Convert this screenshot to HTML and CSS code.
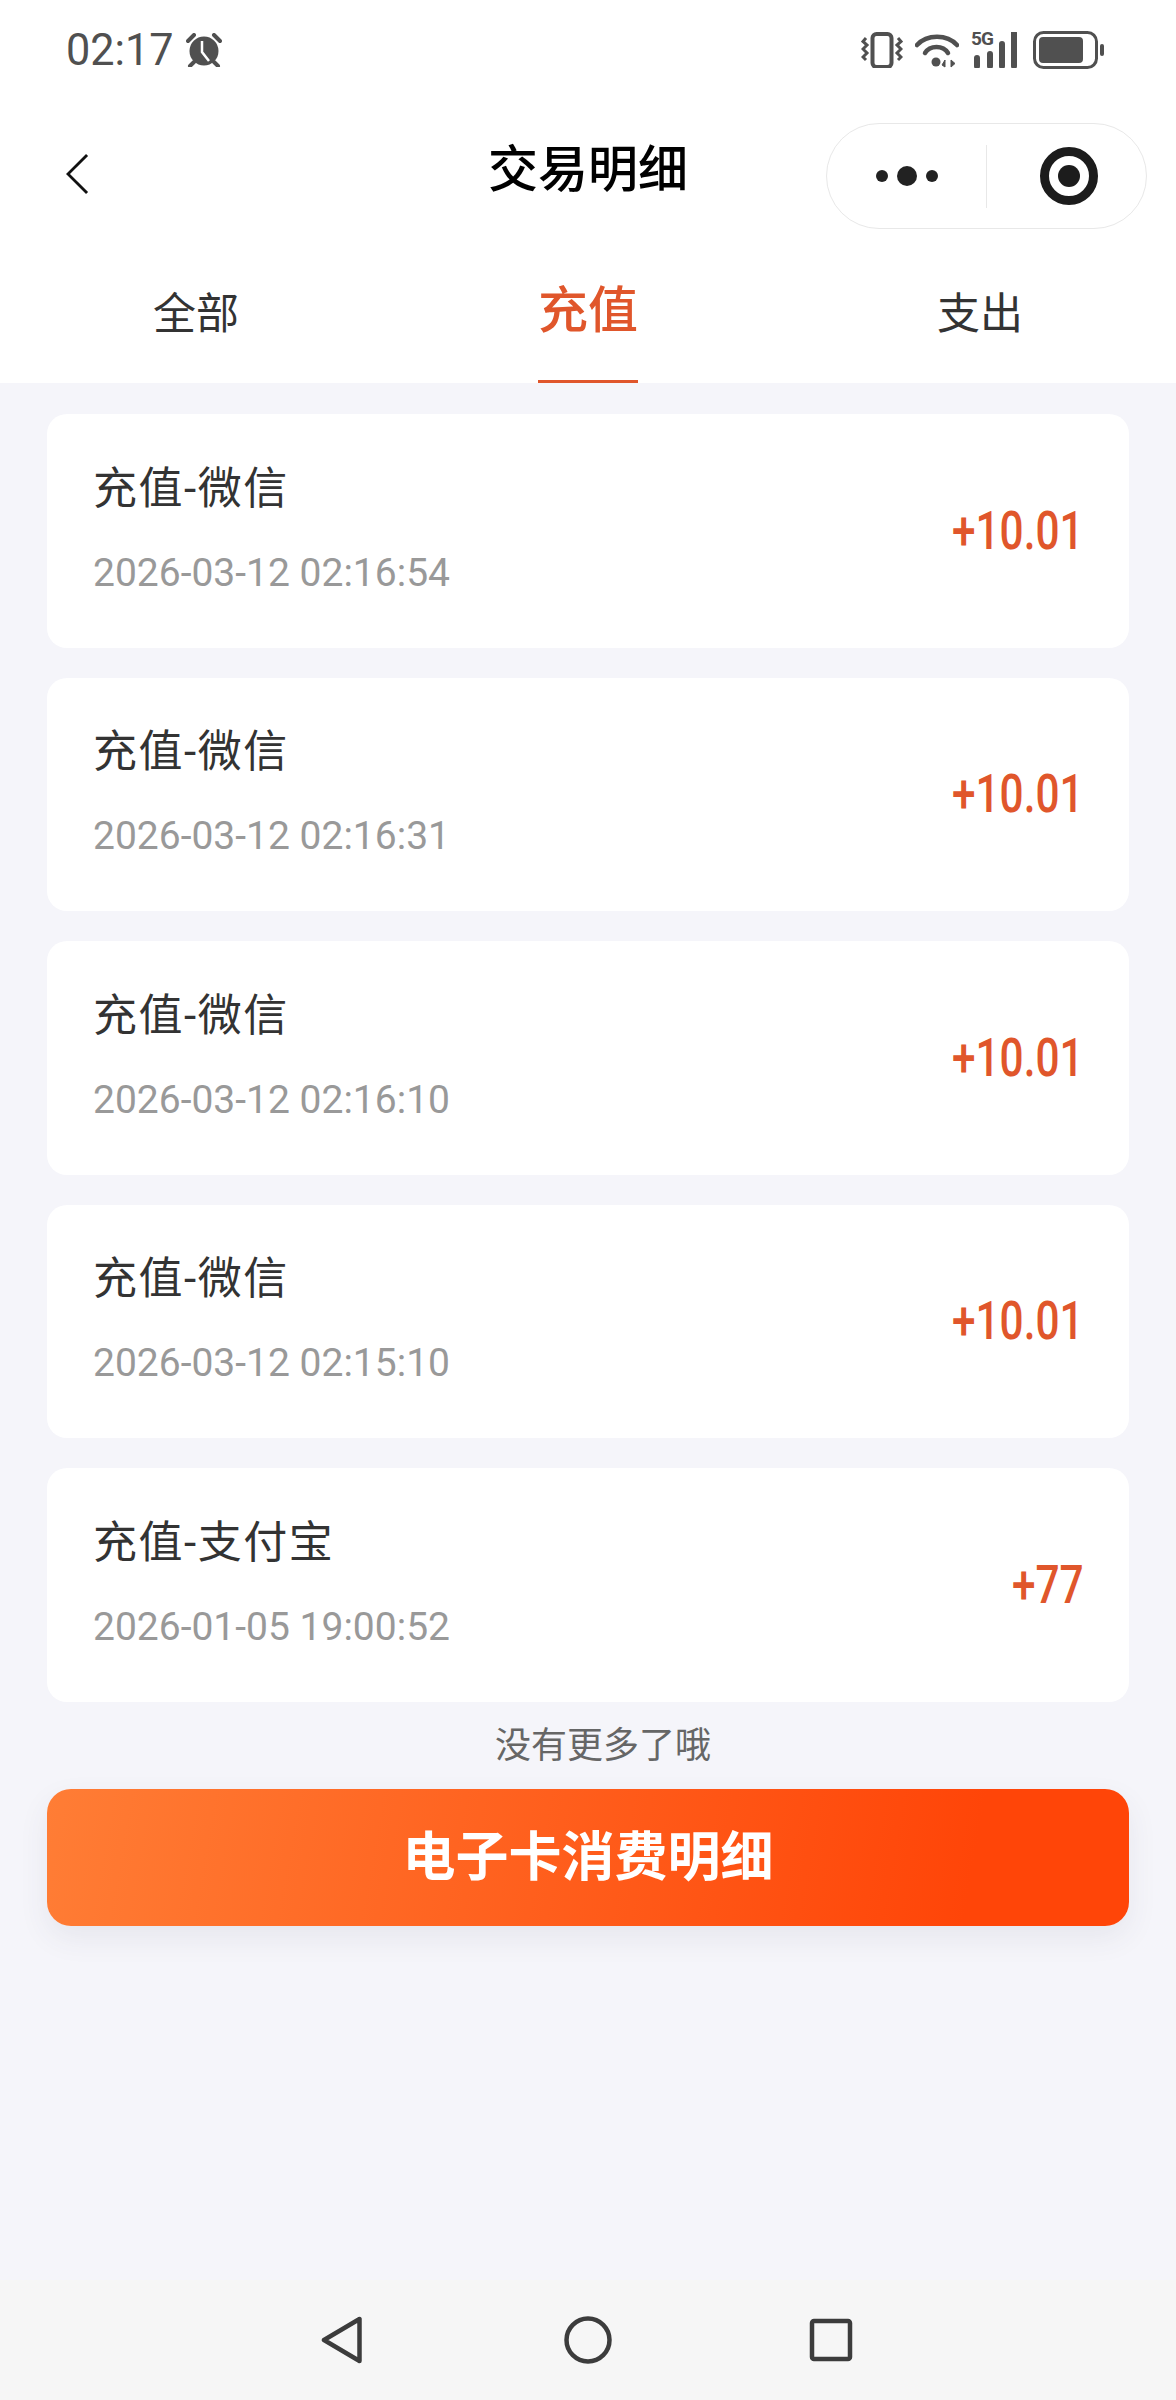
FILE: index.html
```html
<!DOCTYPE html>
<html lang="zh-CN">
<head>
    <meta charset="UTF-8">
    <meta name="viewport" content="width=device-width, initial-scale=1.0">
    <title>交易明细</title>
    <link rel="stylesheet" href="styles.css">
</head>
<body>

<div class="page">
    <header class="top">
        <div class="status-bar">
            <div class="status-left">
                <span class="clock">02:17</span>
                <svg class="alarm" width="36" height="34" viewBox="0 0 36 34">
                    <circle cx="18" cy="18" r="14.500" fill="#505050"/>
                    <path d="M2 8 L8 2 M34 8 L28 2 M8 29 L4 33 M28 29 L32 33" stroke="#505050" stroke-width="4" stroke-linecap="round"/>
                    <path d="M16 8 V19 L23 28" stroke="#fff" stroke-width="2.500" fill="none"/>
                </svg>
            </div>
            <div class="status-right">
                <svg width="42" height="36" viewBox="0 0 42 36">
                    <rect x="11.500" y="2" width="19" height="33" rx="4" fill="none" stroke="#505050" stroke-width="4"/>
                    <path d="M5 6 L2 9.500 L6 13 L2 17 L6 21 L2 25 L5 28 M37 6 L40 9.500 L36 13 L40 17 L36 21 L40 25 L37 28" fill="none" stroke="#505050" stroke-width="3"/>
                </svg>
                <svg width="44" height="36" viewBox="0 0 44 36">
                    <path d="M2 13 C12 2 32 2 42 13" fill="none" stroke="#505050" stroke-width="4.500" stroke-linecap="round"/>
                    <path d="M10 21 C15 13 28 13 33 21" fill="none" stroke="#505050" stroke-width="4.500" stroke-linecap="round"/>
                    <circle cx="21" cy="30" r="4.500" fill="#505050"/>
                    <path d="M30 35 V28 L27 33 Z M36 28 V35 L40 31.500 Z" fill="#505050" stroke="#505050"/>
                </svg>
                <div class="signal">
                    <span class="signal-5g">5G</span>
                    <svg width="50" height="36" viewBox="0 0 50 36">
                        <path d="M8 35 V27 M21 35 V23 M33 35 V13 M45 35 V2" stroke="#505050" stroke-width="6" stroke-linecap="round" fill="none" transform="translate(-2 -1)"/>
                    </svg>
                </div>
                <svg width="72" height="38" viewBox="0 0 72 38">
                    <rect x="1.500" y="1.500" width="62" height="35" rx="9" fill="none" stroke="#505050" stroke-width="3"/>
                    <rect x="6" y="6" width="44" height="26" rx="4" fill="#505050"/>
                    <rect x="67" y="13" width="4" height="12" rx="2" fill="#505050"/>
                </svg>
            </div>
        </div>

        <div class="title-bar">
            <svg class="back" width="23" height="42" viewBox="0 0 24 44">
                <path d="M22 2 L2 22 L22 42" fill="none" stroke="#111" stroke-width="3"/>
            </svg>
            <h1>交易明细</h1>
            <div class="capsule">
                <div class="capsule-side">
                    <i class="dot"></i><i class="dot dot-big"></i><i class="dot"></i>
                </div>
                <div class="capsule-side">
                    <i class="target"></i>
                </div>
            </div>
        </div>

        <nav class="tabs">
            <div class="tab"><span>全部</span></div>
            <div class="tab active"><span>充值</span></div>
            <div class="tab"><span>支出</span></div>
        </nav>
    </header>

    <main>
        <div class="list">
            <div class="card">
                <div class="card-info">
                    <div class="card-title">充值-微信</div>
                    <div class="card-date">2026-03-12 02:16:54</div>
                </div>
                <div class="amount">+10.01</div>
            </div>
            <div class="card">
                <div class="card-info">
                    <div class="card-title">充值-微信</div>
                    <div class="card-date">2026-03-12 02:16:31</div>
                </div>
                <div class="amount">+10.01</div>
            </div>
            <div class="card">
                <div class="card-info">
                    <div class="card-title">充值-微信</div>
                    <div class="card-date">2026-03-12 02:16:10</div>
                </div>
                <div class="amount">+10.01</div>
            </div>
            <div class="card">
                <div class="card-info">
                    <div class="card-title">充值-微信</div>
                    <div class="card-date">2026-03-12 02:15:10</div>
                </div>
                <div class="amount">+10.01</div>
            </div>
            <div class="card">
                <div class="card-info">
                    <div class="card-title">充值-支付宝</div>
                    <div class="card-date">2026-01-05 19:00:52</div>
                </div>
                <div class="amount">+77</div>
            </div>
        </div>
        <p class="no-more">没有更多了哦</p>
        <button class="detail-btn">电子卡消费明细</button>
    </main>

    <footer class="nav-bar">
        <svg width="42" height="48" viewBox="0 0 42 48">
            <path d="M38.500 3 V45 L3 24 Z" fill="none" stroke="#3c3c3c" stroke-width="4.500" stroke-linejoin="round"/>
        </svg>
        <svg class="nav-home" width="48" height="48" viewBox="0 0 48 48">
            <circle cx="24" cy="24" r="21.500" fill="none" stroke="#3c3c3c" stroke-width="4.500"/>
        </svg>
        <svg width="44" height="44" viewBox="0 0 44 44">
            <rect x="3" y="3" width="38" height="38" rx="2" fill="none" stroke="#3c3c3c" stroke-width="4.500"/>
        </svg>
    </footer>
</div>

</body>
</html>
```

FILE: styles.css
```css
* {
    box-sizing: border-box;
}

body {
    margin: 0;
    padding: 0;
    background: #f5f5fa;
    color: #333;
    font-family: Roboto, "Noto Sans CJK SC", sans-serif;
}

.page {
    display: flex;
    flex-direction: column;
    height: 2400px;
}

.top {
    background: #fff;
}

.status-bar {
    height: 100px;
    padding: 0 71px 0 66px;
    display: flex;
    justify-content: space-between;
    align-items: center;
    color: #505050;
}

.status-left {
    display: flex;
    align-items: center;
    gap: 12px;
}

.clock {
    font-size: 45px;
    line-height: 50px;
    transform: scaleX(0.96);
    transform-origin: left;
    margin-right: -4px;
}

.status-right {
    display: flex;
    align-items: center;
    gap: 12px;
}

.signal {
    position: relative;
    width: 50px;
    height: 36px;
}

.signal-5g {
    position: absolute;
    left: 0;
    top: -3px;
    font-size: 19px;
    font-weight: 700;
    letter-spacing: -1px;
    line-height: 20px;
}

.title-bar {
    height: 152px;
    padding: 0 29px;
    display: grid;
    grid-template-columns: 1fr auto 1fr;
    align-items: center;
}

.back {
    margin: 0 0 5px 37px;
}

.title-bar h1 {
    margin: 0 0 12px;
    font-size: 50px;
    font-weight: 500;
    line-height: 1.2;
    color: #000;
}

.capsule {
    justify-self: end;
    width: 321px;
    height: 106px;
    border: 1.5px solid #e8e8e8;
    border-radius: 53px;
    display: flex;
    align-items: center;
}

.capsule-side {
    flex: 1;
    height: 63px;
    display: flex;
    justify-content: center;
    align-items: center;
    gap: 9px;
}

.capsule-side:first-child {
    border-right: 1.5px solid #e8e8e8;
}

.dot {
    width: 12px;
    height: 12px;
    border-radius: 50%;
    background: #222;
}

.dot-big {
    width: 20px;
    height: 20px;
}

.target {
    width: 58px;
    height: 58px;
    margin-left: 4px;
    border: 9px solid #1c1c1c;
    border-radius: 50%;
    display: flex;
    justify-content: center;
    align-items: center;
}

.target::after {
    content: "";
    width: 22px;
    height: 22px;
    border-radius: 50%;
    background: #1c1c1c;
}

.tabs {
    height: 131px;
    display: flex;
}

.tab {
    flex: 1;
    display: flex;
    justify-content: center;
    font-size: 43px;
    color: #333;
}

.tab span {
    padding-top: 27px;
}

.tab.active {
    font-size: 50px;
    font-weight: 500;
    color: #e0562b;
}

.tab.active span {
    padding-top: 18px;
    border-bottom: 3px solid #e0562b;
}

main {
    padding: 31px 47px 0;
}

.list {
    display: flex;
    flex-direction: column;
    gap: 30px;
}

.card {
    height: 233.500px;
    padding: 0 45px 0 46px;
    background: #fff;
    border-radius: 20px;
    display: flex;
    justify-content: space-between;
    align-items: center;
}

.card-info {
    padding-bottom: 5px;
}

.card-title {
    font-size: 44px;
    line-height: 60px;
    letter-spacing: 1.500px;
    color: #333;
}

.card-date {
    margin-top: 29px;
    font-size: 39px;
    line-height: 50px;
    color: #999;
}

.amount {
    font-size: 53px;
    font-weight: 500;
    color: #e0562b;
    transform: scaleX(0.8);
    transform-origin: right;
}

.no-more {
    margin: 14px 0 0;
    padding-left: 30px;
    font-size: 36px;
    line-height: 60px;
    text-align: center;
    color: #666;
}

.detail-btn {
    display: block;
    width: 100%;
    height: 137px;
    margin-top: 13px;
    padding: 0 0 8px;
    border: none;
    border-radius: 24px;
    background: linear-gradient(100deg, #ff7d35, #ff4508 85%);
    box-shadow: 0 12px 30px rgba(60, 60, 90, 0.08);
    color: #fff;
    font-family: inherit;
    font-size: 53px;
    font-weight: 700;
}

.nav-bar {
    margin-top: auto;
    height: 120px;
    padding: 0 323px 0 321px;
    background: #f6f6f6;
    display: flex;
    justify-content: space-between;
    align-items: center;
}

.nav-home {
    margin-left: 4px;
}
```
